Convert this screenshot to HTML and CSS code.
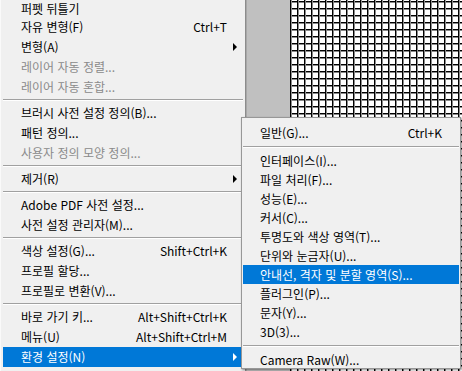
FILE: index.html
```html
<!DOCTYPE html>
<html lang="ko">
<head>
    <meta charset="UTF-8">
    <meta name="viewport" content="width=device-width, initial-scale=1.0">
    <title>편집 메뉴</title>
    <link rel="stylesheet" href="styles.css">
</head>
<body>

<div class="workspace">
    <div class="menu main-menu">
        <div class="item top-item"><span>퍼펫 뒤틀기</span></div>
        <div class="item"><span>자유 변형(F)</span><span class="key">Ctrl+T</span></div>
        <div class="item"><span>변형(A)</span><span></span><i class="arrow"></i></div>
        <div class="item disabled"><span>레이어 자동 정렬...</span></div>
        <div class="item disabled"><span>레이어 자동 혼합...</span></div>
        <div class="sep"></div>
        <div class="item"><span>브러시 사전 설정 정의(B)...</span></div>
        <div class="item"><span>패턴 정의...</span></div>
        <div class="item disabled"><span>사용자 정의 모양 정의...</span></div>
        <div class="sep"></div>
        <div class="item"><span>제거(R)</span><span></span><i class="arrow"></i></div>
        <div class="sep"></div>
        <div class="item"><span>Adobe PDF 사전 설정...</span></div>
        <div class="item"><span>사전 설정 관리자(M)...</span></div>
        <div class="sep"></div>
        <div class="item"><span>색상 설정(G)...</span><span class="key">Shift+Ctrl+K</span></div>
        <div class="item"><span>프로필 할당...</span></div>
        <div class="item"><span>프로필로 변환(V)...</span></div>
        <div class="sep"></div>
        <div class="item"><span>바로 가기 키...</span><span class="key">Alt+Shift+Ctrl+K</span></div>
        <div class="item"><span>메뉴(U)</span><span class="key">Alt+Shift+Ctrl+M</span></div>
        <div class="item active"><span>환경 설정(N)</span><span></span><i class="arrow"></i></div>
    </div>
    <div class="pasteboard"></div>
    <div class="canvas"></div>

    <div class="menu sub-menu">
        <div class="item"><span>일반(G)...</span><span class="key">Ctrl+K</span></div>
        <div class="sep"></div>
        <div class="item"><span>인터페이스(I)...</span></div>
        <div class="item"><span>파일 처리(F)...</span></div>
        <div class="item"><span>성능(E)...</span></div>
        <div class="item"><span>커서(C)...</span></div>
        <div class="item"><span>투명도와 색상 영역(T)...</span></div>
        <div class="item"><span>단위와 눈금자(U)...</span></div>
        <div class="item active"><span>안내선, 격자 및 분할 영역(S)...</span></div>
        <div class="item"><span>플러그인(P)...</span></div>
        <div class="item"><span>문자(Y)...</span></div>
        <div class="item"><span>3D(3)...</span></div>
        <div class="sep"></div>
        <div class="item"><span>Camera Raw(W)...</span></div>
    </div>
</div>

</body>
</html>
```

FILE: styles.css
```css
body {
    margin: 0;
    font-family: "Noto Sans CJK KR", "Noto Sans", sans-serif;
    font-size: 12px;
}
.workspace {
    position: relative;
    display: flex;
    width: 462px;
    height: 371px;
    overflow: hidden;
    background-color: #c0c0c0;
}
.menu {
    box-sizing: border-box;
    background-color: #f0f0f0;
    color: #000;
}
.main-menu {
    flex: none;
    width: 246px;
    padding: 0 2px;
    border-right: 1px solid #8c8c8c;
    border-left: 1px solid #fafafa;
}
.pasteboard {
    flex: none;
    width: 43px;
    border-left: 1px solid #a8a8a8;
}
.canvas {
    flex: 1;
    background-color: #fff;
    background-image:
        linear-gradient(to right, #000 1px, #8a8a8a 1px, #8a8a8a 2px, transparent 2px),
        linear-gradient(to bottom, #000 1px, #8a8a8a 1px, #8a8a8a 2px, transparent 2px);
    background-size: 7px 7px;
    background-position: 0 1px;
}
.item {
    display: grid;
    grid-template-columns: 1fr auto 10px;
    align-items: center;
    height: 20px;
    line-height: 20px;
    padding: 0 6px 0 18px;
    white-space: nowrap;
}
.top-item {
    height: 17px;
    line-height: 17px;
    align-items: start;
}
.key {
    text-align: right;
}
.disabled {
    color: #8a8a8a;
}
.active {
    background-color: #0078d7;
    color: #fff;
}
.arrow {
    justify-self: start;
    margin-left: 6px;
    width: 0;
    height: 0;
    border-top: 4px solid transparent;
    border-bottom: 4px solid transparent;
    border-left: 4px solid #000;
}
.active .arrow {
    border-left-color: #fff;
}
.sep {
    height: 6px;
    display: flex;
    align-items: center;
}
.sep::before {
    content: "";
    flex: 1;
    height: 1px;
    border-bottom: 1px solid #fff;
    background-color: #a0a0a0;
}
.sub-menu {
    position: absolute;
    left: 241px;
    top: 117px;
    width: 220px;
    height: 252px;
    padding: 5px 1px 2px 1px;
    border: 1px solid #979797;
    box-shadow: 1px 1px 2px rgba(0, 0, 0, 0.45);
}
.sub-menu .item {
    height: 19px;
    line-height: 19px;
    padding: 0 7px 0 17px;
}
.sub-menu .sep {
    height: 9px;
}
```
